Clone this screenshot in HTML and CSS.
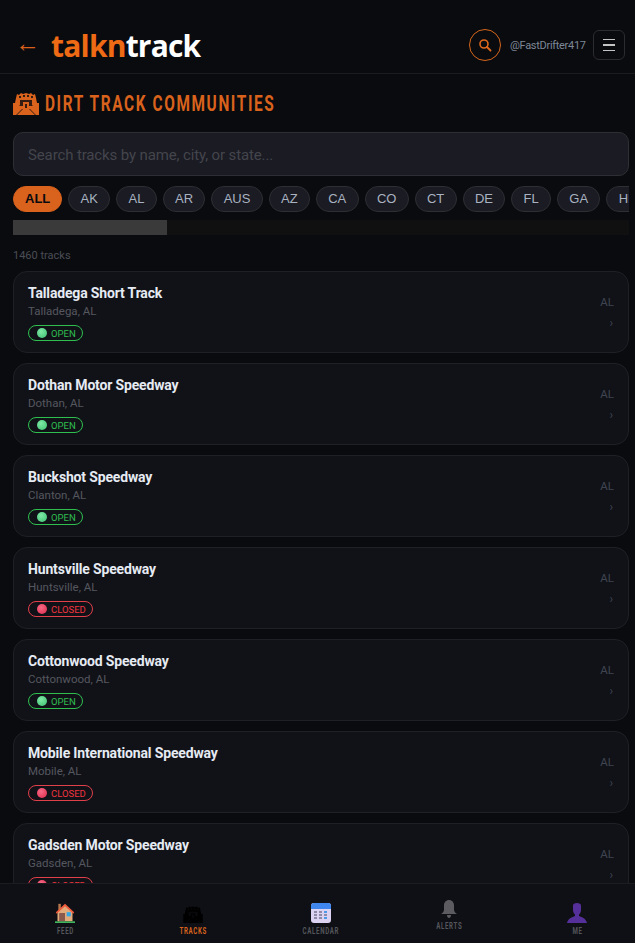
FILE: index.html
```html
<!DOCTYPE html>
<html lang="en">
<head>
    <meta charset="UTF-8">
    <title>Tracks</title>
    <link rel="stylesheet" href="styles.css">
</head>
<body>
    <svg class="defs" width="0" height="0">
        <symbol id="stadium" viewBox="0 0 26 24">
            <path d="M0 12h26v12H0z"/>
            <path d="M4 3l2 1 2-2 2 1 3-1 3 1 2-1 2 2 2-1 1 4 1 5H2l1-5z"/>
            <g class="cut">
                <path d="M6 5h2v2H6zM10 4h2v2h-2zM14 4h2v2h-2zM18 5h2v2h-2z"/>
                <path d="M7 9h12v5l1 1H6l1-1z"/>
                <path d="M9 18L3 24h1l6-6zM17 18l6 6h-1l-6-6z"/>
            </g>
            <path d="M10 11h6v6h-6z"/>
            <path class="cut" d="M12 13h2v4h-2z"/>
        </symbol>
    </svg>

    <header class="topbar">
        <div class="brand">
            <span class="back">←</span>
            <span class="logo"><span class="logo-a">talkn</span>track</span>
        </div>
        <div class="top-right">
            <span class="search-btn">
                <svg width="14" height="14" viewBox="0 0 14 14"><circle cx="6" cy="6" r="4" fill="none" stroke="#e0691c" stroke-width="1.6"/><path d="M9 9l3.500 3.500" stroke="#e0691c" stroke-width="1.800" stroke-linecap="round"/></svg>
            </span>
            <span class="user">@FastDrifter417</span>
            <span class="menu-btn"><i></i><i></i><i></i></span>
        </div>
    </header>

    <main class="page">
        <h1 class="title">
            <svg class="title-icon"><use href="#stadium"/></svg>
            <span class="title-text">DIRT TRACK COMMUNITIES</span>
        </h1>
        <div class="search">Search tracks by name, city, or state...</div>
        <div class="chips">
            <span class="chip active">ALL</span>
            <span class="chip">AK</span>
            <span class="chip">AL</span>
            <span class="chip">AR</span>
            <span class="chip">AUS</span>
            <span class="chip">AZ</span>
            <span class="chip">CA</span>
            <span class="chip">CO</span>
            <span class="chip">CT</span>
            <span class="chip">DE</span>
            <span class="chip">FL</span>
            <span class="chip">GA</span>
            <span class="chip">HI</span>
        </div>
        <div class="scroll-track"><div class="scroll-thumb"></div></div>
        <p class="count">1460 tracks</p>

        <div class="list">
            <a class="card">
                <div class="card-main">
                    <div class="name">Talladega Short Track</div>
                    <div class="city">Talladega, AL</div>
                    <span class="badge open"><i></i>OPEN</span>
                </div>
                <div class="card-side"><span>AL</span><span class="arrow">›</span></div>
            </a>
            <a class="card">
                <div class="card-main">
                    <div class="name">Dothan Motor Speedway</div>
                    <div class="city">Dothan, AL</div>
                    <span class="badge open"><i></i>OPEN</span>
                </div>
                <div class="card-side"><span>AL</span><span class="arrow">›</span></div>
            </a>
            <a class="card">
                <div class="card-main">
                    <div class="name">Buckshot Speedway</div>
                    <div class="city">Clanton, AL</div>
                    <span class="badge open"><i></i>OPEN</span>
                </div>
                <div class="card-side"><span>AL</span><span class="arrow">›</span></div>
            </a>
            <a class="card">
                <div class="card-main">
                    <div class="name">Huntsville Speedway</div>
                    <div class="city">Huntsville, AL</div>
                    <span class="badge closed"><i></i>CLOSED</span>
                </div>
                <div class="card-side"><span>AL</span><span class="arrow">›</span></div>
            </a>
            <a class="card">
                <div class="card-main">
                    <div class="name">Cottonwood Speedway</div>
                    <div class="city">Cottonwood, AL</div>
                    <span class="badge open"><i></i>OPEN</span>
                </div>
                <div class="card-side"><span>AL</span><span class="arrow">›</span></div>
            </a>
            <a class="card">
                <div class="card-main">
                    <div class="name">Mobile International Speedway</div>
                    <div class="city">Mobile, AL</div>
                    <span class="badge closed"><i></i>CLOSED</span>
                </div>
                <div class="card-side"><span>AL</span><span class="arrow">›</span></div>
            </a>
            <a class="card">
                <div class="card-main">
                    <div class="name">Gadsden Motor Speedway</div>
                    <div class="city">Gadsden, AL</div>
                    <span class="badge closed"><i></i>CLOSED</span>
                </div>
                <div class="card-side"><span>AL</span><span class="arrow">›</span></div>
            </a>
        </div>
    </main>

    <nav class="bottom">
        <a class="tab">
            <svg width="20" height="20" viewBox="0 0 24 24">
                <path d="M4 1h3v8H4z" fill="#b5764a"/>
                <path d="M3 10l9-8 9 8v12H3z" fill="#e3ab7c"/>
                <path d="M1 11L12 1l11 10-1 2L12 4 2 13z" fill="#ee5a3c"/>
                <path d="M5 12h7v10H5z" fill="#8a5a4c"/>
                <path d="M14 11h5v5h-5z" fill="#35a9e6"/>
                <path d="M0 22h24v2H0z" fill="#3fb45c"/>
            </svg>
            <span class="tab-label">FEED</span>
        </a>
        <a class="tab current">
            <svg class="tab-stadium"><use href="#stadium"/></svg>
            <span class="tab-label">TRACKS</span>
        </a>
        <a class="tab">
            <svg width="20" height="20" viewBox="0 0 20 20">
                <rect width="20" height="20" rx="3" fill="#dcd3f2"/>
                <path d="M0 6V3a3 3 0 0 1 3-3h14a3 3 0 0 1 3 3v3z" fill="#3f86ee"/>
                <g fill="#8f8aa8">
                    <path d="M3 8h3v2H3zM8 8h3v2H8zM3 11h3v2H3zM8 11h3v2H8zM13 11h3v2h-3zM3 14h3v2H3zM8 14h3v2H8z"/>
                </g>
                <path d="M13 8h3v2h-3zM13 14h3v2h-3z" fill="#4b9be8"/>
            </svg>
            <span class="tab-label">CALENDAR</span>
        </a>
        <a class="tab alerts">
            <svg width="16" height="18" viewBox="0 0 16 18">
                <path d="M8 0c3 0 5 2.400 5 5.500V10c0 1.500 1.500 3 3 4H0c1.500-1 3-2.500 3-4V5.500C3 2.400 5 0 8 0z" fill="#5c5c60"/>
                <path d="M6 15h4c0 2-1 3-2 3s-2-1-2-3z" fill="#5c5c60"/>
            </svg>
            <span class="tab-label">ALERTS</span>
        </a>
        <a class="tab">
            <svg width="20" height="20" viewBox="0 0 20 20">
                <path d="M6 2.500C6 1 7.500 0 10 0s4 1 4 2.500V7c0 2-1 4-2 4.500V13c3 1 7 2.500 8 7H0c1-4.500 5-6 8-7v-1.500C7 11 6 9 6 7z" fill="#56309a"/>
            </svg>
            <span class="tab-label">ME</span>
        </a>
    </nav>
</body>
</html>
```
FILE: styles.css
```css
* {
    padding: 0;
    margin: 0;
    box-sizing: border-box;
}
html, body {
    height: 100%;
    overflow: hidden;
}
body {
    background: #0a0b0f;
    color: #e8ecf2;
    font-family: "Roboto", "Liberation Sans", sans-serif;
}
.defs {
    display: block;
}
.cut {
    fill: #0a0b0f;
    opacity: .8;
}

/* top bar */
.topbar {
    height: 74px;
    display: flex;
    align-items: center;
    justify-content: space-between;
    padding: 17px 10px 0 13px;
    border-bottom: 1px solid #1c1c20;
}
.brand {
    display: flex;
    align-items: center;
    gap: 11px;
}
.back {
    color: #d9601c;
    font-family: "Liberation Sans", sans-serif;
    font-size: 25px;
    line-height: 1;
    margin: -4px 0 0 2px;
}
.logo {
    font-family: "Open Sans", sans-serif;
    font-weight: 700;
    font-size: 30px;
    letter-spacing: -0.8px;
    color: #fff;
}
.logo-a {
    color: #ee6a14;
}
.top-right {
    display: flex;
    align-items: center;
}
.search-btn {
    width: 32px;
    height: 32px;
    border: 1px solid #d4651c;
    border-radius: 50%;
    display: flex;
    align-items: center;
    justify-content: center;
}
.user {
    width: 75px;
    white-space: nowrap;
    color: #7d8796;
    font-size: 11px;
    letter-spacing: -.3px;
    margin: 0 8px 0 9px;
}
.menu-btn {
    width: 32px;
    height: 30px;
    border: 1px solid #2c2c30;
    border-radius: 6px;
    display: flex;
    flex-direction: column;
    align-items: center;
    justify-content: center;
    gap: 4px;
}
.menu-btn i {
    display: block;
    width: 12px;
    height: 1.500px;
    background: #c4c4c4;
}

/* page */
.page {
    padding: 0 6px 0 13px;
}
.title {
    display: flex;
    align-items: center;
    gap: 6px;
    height: 58px;
    font-size: 22px;
    font-weight: 700;
    letter-spacing: 2.3px;
    color: #d9621c;
}
.title-text {
    transform: scaleX(.7);
    transform-origin: left center;
    white-space: nowrap;
}
.title-icon {
    width: 26px;
    height: 24px;
    fill: #d9621c;
}
.search {
    height: 44px;
    background: #1a1b23;
    border: 1px solid #2e2e34;
    border-radius: 10px;
    padding: 2px 14px 0;
    display: flex;
    align-items: center;
    font-size: 15px;
    letter-spacing: -.13px;
    color: #44454c;
}
.chips {
    display: flex;
    gap: 6px;
    margin-top: 10px;
    overflow: hidden;
}
.chip {
    flex: none;
    height: 26px;
    line-height: 24px;
    padding: 0 11.300px;
    background: #1a1b23;
    border: 1px solid #2e2e34;
    border-radius: 13px;
    font-family: "Liberation Sans", sans-serif;
    font-size: 13px;
    color: #a9b2c0;
}
.chip.active {
    padding: 0 11px;
    background: #d9621c;
    border-color: #d9621c;
    color: #0a0b0f;
    font-weight: 700;
}
.scroll-track {
    height: 15px;
    margin-top: 8px;
    background: #101010;
}
.scroll-thumb {
    width: 154px;
    height: 15px;
    background: #3a3a3a;
}
.count {
    margin-top: 14px;
    font-size: 11px;
    line-height: 14px;
    color: #4a4d55;
}

/* track cards */
.list {
    display: flex;
    flex-direction: column;
    gap: 10px;
    margin-top: 8px;
}
.card {
    height: 82px;
    flex: none;
    display: flex;
    justify-content: space-between;
    background: #111218;
    border: 1px solid #1f2025;
    border-radius: 14px;
    padding: 12px 14px;
}
.name {
    font-size: 14px;
    font-weight: 700;
    line-height: 18px;
    letter-spacing: -.16px;
    color: #e6ebf3;
}
.city {
    font-size: 11.500px;
    line-height: 14px;
    margin-top: 2px;
    color: #55575f;
}
.badge {
    display: inline-flex;
    align-items: center;
    gap: 4px;
    height: 16px;
    margin-top: 7px;
    padding: 0 6px 0 8px;
    border: 1px solid;
    border-radius: 8px;
    font-size: 9.500px;
}
.badge i {
    width: 10px;
    height: 10px;
    border-radius: 50%;
}
.badge.open {
    color: #2fbf4f;
    border-color: #2fbf4f;
}
.badge.open i {
    background: radial-gradient(circle at 40% 35%, #7fe8a5, #3cc070);
}
.badge.closed {
    color: #f0343f;
    border-color: #e0404a;
}
.badge.closed i {
    background: radial-gradient(circle at 40% 35%, #f56a85, #e0284a);
}
.card-side {
    display: flex;
    flex-direction: column;
    align-items: flex-end;
    padding-top: 11px;
    font-size: 11.500px;
    color: #3f4550;
}
.arrow {
    margin-top: 7px;
    padding-right: 1px;
    font-size: 12px;
}

/* bottom nav */
.bottom {
    position: fixed;
    left: 0;
    bottom: 0;
    width: 100%;
    height: 60px;
    padding-left: 1px;
    background: #0f1015;
    border-top: 1px solid #1c1c20;
    display: flex;
}
.tab {
    flex: none;
    width: 128px;
    display: flex;
    flex-direction: column;
    align-items: center;
    justify-content: flex-end;
    gap: 3px;
    padding-bottom: 7px;
    font-size: 9px;
    font-weight: 700;
    letter-spacing: 1px;
    color: #55565c;
}
.tab-label {
    transform: scaleX(.68);
    white-space: nowrap;
}
.tab.current {
    color: #d9621c;
}
.tab.alerts {
    padding-bottom: 12px;
}
.tab-stadium {
    width: 20px;
    height: 18px;
    fill: #000;
}
```
